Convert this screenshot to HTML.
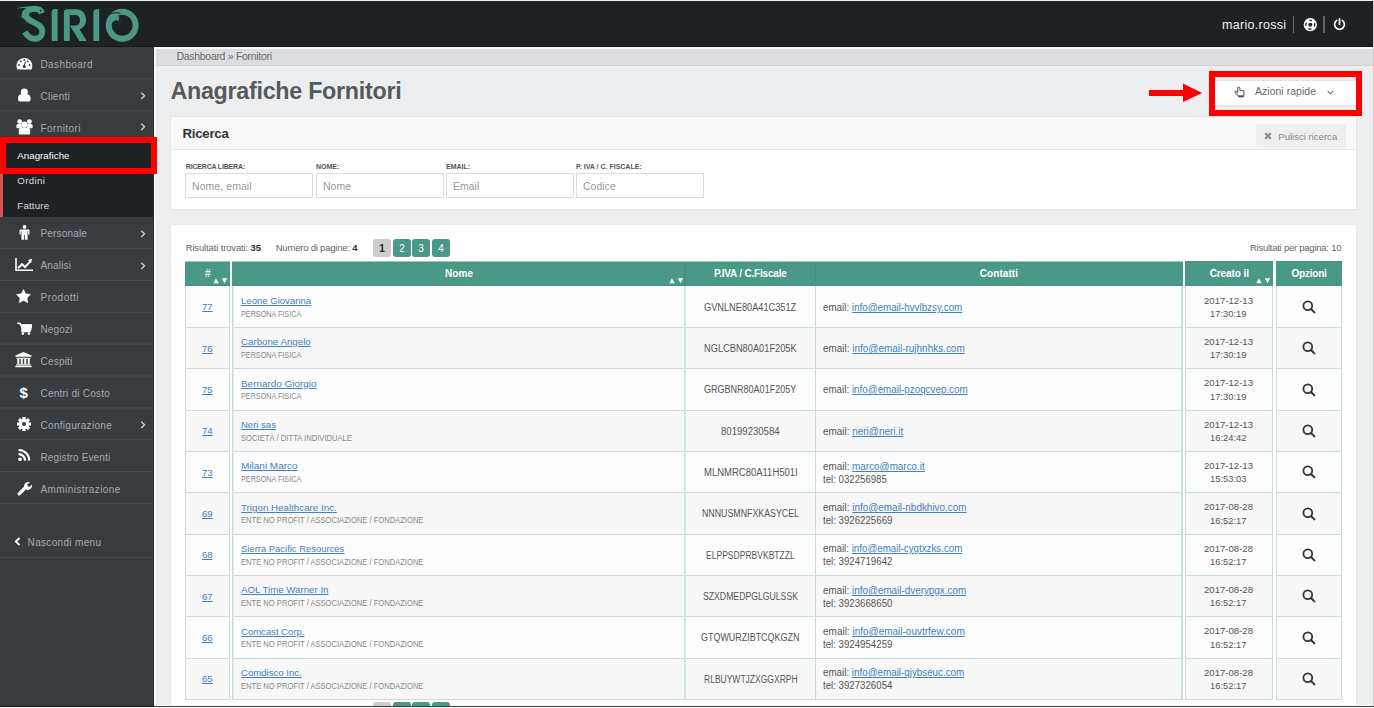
<!DOCTYPE html>
<html><head><meta charset="utf-8"><style>
html,body{margin:0;padding:0;width:1374px;height:708px;overflow:hidden;background:#edeef0}
body{position:relative;font-family:"Liberation Sans",sans-serif}
.t{position:absolute;white-space:nowrap}
.r{position:absolute;display:block}
</style></head><body>
<div class="r" style="left:0px;top:0px;width:1374px;height:708px;background:#edeef0"></div>
<div class="r" style="left:0px;top:0px;width:1374px;height:1px;background:#f4f4f4"></div>
<div class="r" style="left:0px;top:1px;width:1373px;height:46px;background:#1f2224"></div>
<div class="r" style="left:0px;top:46px;width:1373px;height:1px;background:#16191a"></div>
<div class="r" style="left:0px;top:47px;width:154px;height:659px;background:#383c3f"></div>
<div class="r" style="left:153px;top:47px;width:1px;height:659px;background:#2c3032"></div>
<div class="r" style="left:154px;top:47px;width:2px;height:659px;background:#f6f6f7"></div>
<div class="r" style="left:156px;top:47px;width:1217px;height:2px;background:#f6f6f7"></div>
<div class="r" style="left:156px;top:49px;width:1217px;height:16px;background:#dcdde0"></div>
<div class="r" style="left:156px;top:65px;width:1217px;height:1px;background:#d2d3d6"></div>
<div class="r" style="left:1373px;top:0px;width:1px;height:708px;background:#c9c9c9"></div>
<svg class="r" style="left:0px;top:0px;" width="150" height="47" viewBox="0 0 150 47">
<g fill="none" stroke="#4a9886" stroke-width="6">
<path d="M24.8 32 C27.5 36.5 31 38.8 35 38.8 C39.5 38.8 42.3 35.5 42.3 31.5 C42.3 26.5 38 24.5 34 22.5 C29.5 20.3 26 18.5 26 14.5 C26 10.5 30 8.8 35 8.8 C38.5 8.8 41 10.5 42 13.2"/>
<circle cx="122.2" cy="25.3" r="13.5" stroke-width="5.9"/>
</g>
<g fill="#4a9886">
<path d="M21.3 17 L22.5 11 L26 9 L27 15 L24 19 Z"/>
<path d="M16.4 8.6 C20 7.2 25 6.4 30 6.6 L29 8.2 C25 8 20 8.2 16.4 8.6 Z"/>
<path d="M66.9 9.3 H76 C82 9.3 86.1 13.6 86.1 19.8 C86.1 24.6 83.3 28 79.6 29.6 L86.8 40.9 H79.4 L70.6 26.8 V25.4 H76 C78.5 25.4 80 23 80 20.2 C80 17.2 78.4 15.1 76 15.1 H69.7 V40.9 H63.9 V12.3 C63.9 10.6 65.2 9.3 66.9 9.3 Z"/>
<path d="M54.5 9 H57.6 V40.9 H51.7 V11.8 C51.7 10.3 53 9 54.5 9 Z"/>
<path d="M96.3 9.2 H99.2 V40.9 H93.4 V12.1 C93.4 10.5 94.7 9.2 96.3 9.2 Z"/>
<path d="M111.5 21.5 C112.8 17 116.5 15 119.2 16.6 L118.7 21 C116.4 19.6 113.8 20.2 112.2 22.8 Z"/>
</g>
<path d="M109.3 14.6 C112.5 12.6 116.5 12.3 120.5 13.4" fill="none" stroke="#1f2224" stroke-width="1"/>
<circle cx="40.7" cy="10.6" r="0.9" fill="#1f2224"/>
</svg>
<div class="t" style="left:1222.00px;top:18.00px;font-size:12.5px;line-height:15px;letter-spacing:0.287px;color:#f2f2f2;">mario.rossi</div>
<div class="r" style="left:1293px;top:16px;width:1px;height:17px;background:#6a6d6f"></div>
<div class="r" style="left:1323px;top:16px;width:2px;height:17px;background:#5f6264"></div>
<svg class="r" style="left:1303px;top:18px;" width="15" height="14" viewBox="0 0 15 14"><circle cx="7.3" cy="6.7" r="6.6" fill="#fff"/><circle cx="7.3" cy="6.7" r="2" fill="#1f2224"/><circle cx="7.3" cy="6.7" r="4.4" fill="none" stroke="#1f2224" stroke-width="1.3" stroke-dasharray="3.4 3.51" stroke-dashoffset="1.7" transform="rotate(-90 7.3 6.7)"/></svg>
<svg class="r" style="left:1333px;top:17px;" width="13" height="15" viewBox="0 0 13 15"><path d="M3.69 3.39 A4.9 4.9 0 1 0 9.31 3.39" fill="none" stroke="#fff" stroke-width="1.7" stroke-linecap="round"/><line x1="6.5" y1="2" x2="6.5" y2="7.4" stroke="#fff" stroke-width="1.8" stroke-linecap="round"/></svg>
<div class="r" style="left:0px;top:78px;width:153px;height:1px;background:rgb(67,72,75)"></div>
<div class="r" style="left:0px;top:79px;width:153px;height:1px;background:rgb(61,65,68)"></div>
<div class="r" style="left:0px;top:110px;width:153px;height:1px;background:rgb(67,72,75)"></div>
<div class="r" style="left:0px;top:111px;width:153px;height:1px;background:rgb(61,65,68)"></div>
<div class="r" style="left:0px;top:248px;width:153px;height:1px;background:rgb(70,75,78)"></div>
<div class="r" style="left:0px;top:249px;width:153px;height:1px;background:rgb(58,62,65)"></div>
<div class="r" style="left:0px;top:279px;width:153px;height:1px;background:rgb(57,61,64)"></div>
<div class="r" style="left:0px;top:280px;width:153px;height:1px;background:rgb(71,76,79)"></div>
<div class="r" style="left:0px;top:311px;width:153px;height:1px;background:rgb(59,63,66)"></div>
<div class="r" style="left:0px;top:312px;width:153px;height:1px;background:rgb(69,74,77)"></div>
<div class="r" style="left:0px;top:343px;width:153px;height:1px;background:rgb(62,66,69)"></div>
<div class="r" style="left:0px;top:344px;width:153px;height:1px;background:rgb(66,71,74)"></div>
<div class="r" style="left:0px;top:375px;width:153px;height:1px;background:rgb(64,68,72)"></div>
<div class="r" style="left:0px;top:376px;width:153px;height:1px;background:rgb(64,68,72)"></div>
<div class="r" style="left:0px;top:407px;width:153px;height:1px;background:rgb(66,71,74)"></div>
<div class="r" style="left:0px;top:408px;width:153px;height:1px;background:rgb(62,66,69)"></div>
<div class="r" style="left:0px;top:439px;width:153px;height:1px;background:rgb(69,74,77)"></div>
<div class="r" style="left:0px;top:440px;width:153px;height:1px;background:rgb(59,63,66)"></div>
<div class="r" style="left:0px;top:471px;width:153px;height:1px;background:rgb(71,76,79)"></div>
<div class="r" style="left:0px;top:472px;width:153px;height:1px;background:rgb(57,61,64)"></div>
<div class="r" style="left:0px;top:502px;width:153px;height:1px;background:rgb(58,62,65)"></div>
<div class="r" style="left:0px;top:503px;width:153px;height:1px;background:rgb(70,75,78)"></div>
<div class="r" style="left:0px;top:557px;width:153px;height:1px;background:rgb(72,77,80)"></div>
<div class="r" style="left:0px;top:143px;width:153px;height:74px;background:#1f2224"></div>
<div class="r" style="left:0px;top:143px;width:3px;height:74px;background:#d9534f"></div>
<div class="t" style="left:17.30px;top:150.00px;font-size:9.7px;line-height:12px;letter-spacing:0.045px;color:#ffffff;">Anagrafiche</div>
<div class="t" style="left:17.30px;top:175.00px;font-size:9.7px;line-height:12px;letter-spacing:0.340px;color:#dcdcdc;">Ordini</div>
<div class="t" style="left:17.30px;top:200.00px;font-size:9.7px;line-height:12px;letter-spacing:0.192px;color:#dcdcdc;">Fatture</div>
<div class="t" style="left:40.50px;top:59.00px;font-size:10px;line-height:12px;letter-spacing:0.387px;color:#a3abb3;">Dashboard</div>
<div class="t" style="left:40.50px;top:91.00px;font-size:10px;line-height:12px;letter-spacing:0.233px;color:#a3abb3;">Clienti</div>
<div class="t" style="left:40.50px;top:123.00px;font-size:10px;line-height:12px;letter-spacing:0.412px;color:#a3abb3;">Fornitori</div>
<div class="t" style="left:40.50px;top:228.00px;font-size:10px;line-height:12px;letter-spacing:0.169px;color:#a3abb3;">Personale</div>
<div class="t" style="left:40.50px;top:260.00px;font-size:10px;line-height:12px;letter-spacing:0.175px;color:#a3abb3;">Analisi</div>
<div class="t" style="left:40.50px;top:292.00px;font-size:10px;line-height:12px;letter-spacing:0.507px;color:#a3abb3;">Prodotti</div>
<div class="t" style="left:40.50px;top:324.00px;font-size:10px;line-height:12px;letter-spacing:0.130px;color:#a3abb3;">Negozi</div>
<div class="t" style="left:40.50px;top:356.00px;font-size:10px;line-height:12px;letter-spacing:0.208px;color:#a3abb3;">Cespiti</div>
<div class="t" style="left:40.50px;top:388.00px;font-size:10px;line-height:12px;letter-spacing:0.225px;color:#a3abb3;">Centri di Costo</div>
<div class="t" style="left:40.50px;top:420.00px;font-size:10px;line-height:12px;letter-spacing:0.304px;color:#a3abb3;">Configurazione</div>
<div class="t" style="left:40.50px;top:452.00px;font-size:10px;line-height:12px;letter-spacing:0.129px;color:#a3abb3;">Registro Eventi</div>
<div class="t" style="left:40.50px;top:484.00px;font-size:10px;line-height:12px;letter-spacing:0.421px;color:#a3abb3;">Amministrazione</div>
<div class="t" style="left:27.60px;top:537.00px;font-size:10px;line-height:12px;letter-spacing:0.325px;color:#a3abb3;">Nascondi menu</div>
<svg class="r" style="left:140px;top:91.6px;" width="6" height="8" viewBox="0 0 6 8"><path d="M1.3 0.7 L4.5 3.8 L1.3 6.9" fill="none" stroke="#c9d0d6" stroke-width="1.4"/></svg>
<svg class="r" style="left:140px;top:123.39999999999999px;" width="6" height="8" viewBox="0 0 6 8"><path d="M1.3 0.7 L4.5 3.8 L1.3 6.9" fill="none" stroke="#c9d0d6" stroke-width="1.4"/></svg>
<svg class="r" style="left:140px;top:229.8px;" width="6" height="8" viewBox="0 0 6 8"><path d="M1.3 0.7 L4.5 3.8 L1.3 6.9" fill="none" stroke="#c9d0d6" stroke-width="1.4"/></svg>
<svg class="r" style="left:140px;top:261.6px;" width="6" height="8" viewBox="0 0 6 8"><path d="M1.3 0.7 L4.5 3.8 L1.3 6.9" fill="none" stroke="#c9d0d6" stroke-width="1.4"/></svg>
<svg class="r" style="left:140px;top:420.6px;" width="6" height="8" viewBox="0 0 6 8"><path d="M1.3 0.7 L4.5 3.8 L1.3 6.9" fill="none" stroke="#c9d0d6" stroke-width="1.4"/></svg>
<svg class="r" style="left:13.5px;top:537px;" width="7" height="9" viewBox="0 0 7 9"><path d="M5.5 1 L1.8 4.5 L5.5 8" fill="none" stroke="#fff" stroke-width="1.8"/></svg>
<svg class="r" style="left:15.5px;top:56.5px;" width="17" height="13" viewBox="0 0 17 13"><path d="M1.4 12.5 A7.9 7.9 0 1 1 15.4 12.5 Z" fill="#fff"/><g fill="#383c3f"><circle cx="3" cy="8" r="0.95"/><circle cx="4.7" cy="4.4" r="0.95"/><circle cx="8.3" cy="2.9" r="0.95"/><circle cx="11.8" cy="4.4" r="0.95"/><circle cx="13.6" cy="8" r="0.95"/><circle cx="8.2" cy="9.5" r="1.6"/></g><line x1="8.2" y1="9.5" x2="9.3" y2="4.7" stroke="#383c3f" stroke-width="1.1"/></svg>
<svg class="r" style="left:17.5px;top:87.5px;" width="13" height="14" viewBox="0 0 13 14"><circle cx="6.3" cy="4" r="3.6" fill="#fff"/><path d="M3.3 6.2 H9.3 C11.2 6.2 12.5 7.8 12.5 10 V12 Q12.5 13.4 11.1 13.4 H1.5 Q0.1 13.4 0.1 12 V10 C0.1 7.8 1.4 6.2 3.3 6.2 Z" fill="#fff"/></svg>
<svg class="r" style="left:15.5px;top:118.5px;" width="17" height="16" viewBox="0 0 17 16"><g fill="#fff"><circle cx="3.7" cy="2.6" r="2.4"/><circle cx="13.4" cy="2.6" r="2.4"/><path d="M2.2 5 H5.5 L6 9.2 H1.2 Q0.4 9.2 0.4 8.4 V7 C0.4 5.8 1.1 5 2.2 5 Z"/><path d="M14.8 5 H11.5 L11 9.2 H15.8 Q16.6 9.2 16.6 8.4 V7 C16.6 5.8 15.9 5 14.8 5 Z"/><circle cx="8.5" cy="5.6" r="3.1"/><path d="M5.6 8.6 H11.4 C13 8.6 14.2 9.8 14.2 11.6 V14.3 Q14.2 15.5 13 15.5 H4 Q2.8 15.5 2.8 14.3 V11.6 C2.8 9.8 4 8.6 5.6 8.6 Z"/></g></svg>
<svg class="r" style="left:18.5px;top:224.5px;" width="11" height="15" viewBox="0 0 11 15"><circle cx="5.5" cy="1.9" r="1.9" fill="#fff"/><path d="M1.5 4.4 H9.5 Q10.5 4.4 10.5 5.4 V9.6 H9.2 V6.2 H8.6 V14.8 H5.9 V10 H5.1 V14.8 H2.4 V6.2 H1.8 V9.6 H0.5 V5.4 Q0.5 4.4 1.5 4.4 Z" fill="#fff"/></svg>
<svg class="r" style="left:15px;top:257.5px;" width="18" height="14" viewBox="0 0 18 14"><path d="M1 0 V12.3 H18" fill="none" stroke="#fff" stroke-width="1.6"/><path d="M3 10.2 L7 6.2 L10 9 L15.2 3.6" fill="none" stroke="#fff" stroke-width="2"/><path d="M12.8 2 L17 0.8 L16.2 5 Z" fill="#fff"/></svg>
<svg class="r" style="left:16px;top:288.5px;" width="15" height="15" viewBox="0 0 15 15"><polygon points="7.50,0.40 9.67,4.81 14.54,5.51 11.02,8.94 11.85,13.79 7.50,11.50 3.15,13.79 3.98,8.94 0.46,5.51 5.33,4.81" fill="#fff" stroke="#fff" stroke-width="0.5" stroke-linejoin="round"/></svg>
<svg class="r" style="left:16.5px;top:321.5px;" width="15" height="13" viewBox="0 0 15 13"><path d="M0.3 1.3 H3 L3.6 3 H14.6 L13.4 8.3 H4.8 L5.2 9.5 H13.4" fill="none" stroke="#fff" stroke-width="1.6" stroke-linejoin="round"/><path d="M3.4 2.6 H14.6 L13.4 8.3 H4.8 Z" fill="#fff"/><circle cx="5.8" cy="11.6" r="1.3" fill="#fff"/><circle cx="12" cy="11.6" r="1.3" fill="#fff"/></svg>
<svg class="r" style="left:15px;top:352px;" width="17" height="16" viewBox="0 0 17 16"><path d="M8.5 0 L16.5 3.6 V4.8 H0.5 V3.6 Z" fill="#fff"/><rect x="1.5" y="5.8" width="14" height="1" fill="#fff"/><g fill="#fff"><rect x="2.3" y="6.6" width="2" height="5.4"/><rect x="5.8" y="6.6" width="2" height="5.4"/><rect x="9.2" y="6.6" width="2" height="5.4"/><rect x="12.7" y="6.6" width="2" height="5.4"/></g><rect x="1.2" y="12.3" width="14.6" height="1.2" fill="#fff"/><rect x="0.3" y="13.8" width="16.4" height="1.4" fill="#fff"/></svg>
<div class="t" style="left:19.50px;top:384.00px;font-size:15px;line-height:18px;letter-spacing:0.000px;color:#fff;font-weight:bold;">$</div>
<svg class="r" style="left:17px;top:416.8px;" width="14" height="14" viewBox="0 0 14 14"><g transform="translate(7,7)" fill="#fff"><rect x="-1.6" y="-7" width="3.2" height="3.4" rx="0.5" transform="rotate(0)"/><rect x="-1.6" y="-7" width="3.2" height="3.4" rx="0.5" transform="rotate(45)"/><rect x="-1.6" y="-7" width="3.2" height="3.4" rx="0.5" transform="rotate(90)"/><rect x="-1.6" y="-7" width="3.2" height="3.4" rx="0.5" transform="rotate(135)"/><rect x="-1.6" y="-7" width="3.2" height="3.4" rx="0.5" transform="rotate(180)"/><rect x="-1.6" y="-7" width="3.2" height="3.4" rx="0.5" transform="rotate(225)"/><rect x="-1.6" y="-7" width="3.2" height="3.4" rx="0.5" transform="rotate(270)"/><rect x="-1.6" y="-7" width="3.2" height="3.4" rx="0.5" transform="rotate(315)"/><circle r="4.9"/></g><circle cx="7" cy="7" r="2" fill="#383c3f"/></svg>
<svg class="r" style="left:17.5px;top:448.5px;" width="13" height="12.5" viewBox="0 0 13 12.5"><circle cx="2" cy="10.3" r="1.8" fill="#fff"/><path d="M0.6 5.1 A6.3 6.3 0 0 1 7 11.6" fill="none" stroke="#fff" stroke-width="2.2"/><path d="M0.6 0.9 A10.6 10.6 0 0 1 11.2 11.6" fill="none" stroke="#fff" stroke-width="2.2"/></svg>
<svg class="r" style="left:16.5px;top:480.5px;" width="15" height="15" viewBox="0 0 15 15"><path d="M2.2 12.8 L8 7" stroke="#fff" stroke-width="3.2" stroke-linecap="round"/><path d="M7.2 6.3 A4.3 4.3 0 0 1 12.8 1.2 L10.2 3.6 L10.9 5.3 L12.6 6 L14.9 3.5 A4.3 4.3 0 0 1 9.3 8.6 Z" fill="#fff"/></svg>
<div class="t" style="left:176.50px;top:50.00px;font-size:10.5px;line-height:13px;letter-spacing:-0.302px;color:#6a6a6a;">Dashboard &raquo; Fornitori</div>
<div class="t" style="left:170.40px;top:77.00px;font-size:23.3px;line-height:28px;letter-spacing:-0.278px;color:#555a5d;font-weight:bold;">Anagrafiche Fornitori</div>
<div class="r" style="left:1212px;top:80px;width:144px;height:26px;background:#fff;border-top:1px solid #e3e3e3;border-bottom:1px solid #e3e3e3;box-sizing:border-box"></div>
<div class="t" style="left:1255.00px;top:86.00px;font-size:10.4px;line-height:12px;letter-spacing:0.074px;color:#666;">Azioni rapide</div>
<svg class="r" style="left:1231px;top:84px;" width="18" height="16" viewBox="0 0 18 16"><path d="M7.2 11.6 L4.3 8.7 C3.7 8 4 7.1 4.8 7.3 L6.7 8.3 V4.3 C6.7 3 8.9 3 8.9 4.3 V6.3 L12.1 6.6 C12.7 6.7 12.9 7.2 12.9 7.8 V11.4 L12.5 12.1 H7.6 Z" fill="none" stroke="#666" stroke-width="1.1" stroke-linejoin="round"/><rect x="7.5" y="11.6" width="5.2" height="1.8" fill="#555"/></svg>
<svg class="r" style="left:1327px;top:90px;" width="7" height="5" viewBox="0 0 7 5"><path d="M0.7 0.8 L3.5 3.8 L6.3 0.8" fill="none" stroke="#666" stroke-width="1.1"/></svg>
<div class="r" style="left:1209px;top:71px;width:153px;height:45px;border:6px solid #ff0000;box-sizing:border-box"></div>
<div class="r" style="left:1149px;top:90px;width:36px;height:6px;background:#ff0000"></div>
<svg class="r" style="left:1183px;top:83px;" width="20" height="20" viewBox="0 0 20 20"><polygon points="0,0.6 19,10 0,19" fill="#ff0000"/></svg>
<div class="r" style="left:0px;top:137px;width:157px;height:37px;border:6px solid #ff0000;box-sizing:border-box"></div>
<div class="r" style="left:170px;top:116px;width:1187px;height:94px;background:#fff;border:1px solid #e3e4e6;box-sizing:border-box"></div>
<div class="r" style="left:171px;top:117px;width:1185px;height:32px;background:#f9f9f9"></div>
<div class="r" style="left:171px;top:149px;width:1185px;height:1px;background:#e6e7e8"></div>
<div class="t" style="left:182.50px;top:126.00px;font-size:13.3px;line-height:16px;letter-spacing:-0.285px;color:#333;font-weight:bold;">Ricerca</div>
<div class="r" style="left:1256px;top:124px;width:90px;height:24px;background:#efefef;border-radius:3px"></div>
<svg class="r" style="left:1264px;top:132px;" width="8" height="8" viewBox="0 0 8 8"><path d="M1.2 1.2 L6.8 6.8 M6.8 1.2 L1.2 6.8" stroke="#888" stroke-width="2"/></svg>
<div class="t" style="left:1278.30px;top:131.00px;font-size:9.6px;line-height:12px;letter-spacing:-0.017px;color:#888;">Pulisci ricerca</div>
<div class="t" style="left:185.80px;top:163.00px;font-size:7px;line-height:8px;letter-spacing:-0.189px;color:#555;font-weight:bold;">RICERCA LIBERA:</div>
<div class="r" style="left:185px;top:173px;width:128px;height:25px;background:#fff;border:1px solid #dcdcdc;box-sizing:border-box"></div>
<div class="t" style="left:192.00px;top:180.00px;font-size:10.5px;line-height:13px;letter-spacing:0.064px;color:#999;">Nome, email</div>
<div class="t" style="left:316.00px;top:163.00px;font-size:7px;line-height:8px;letter-spacing:0.000px;color:#555;font-weight:bold;">NOME:</div>
<div class="r" style="left:316px;top:173px;width:128px;height:25px;background:#fff;border:1px solid #dcdcdc;box-sizing:border-box"></div>
<div class="t" style="left:323.00px;top:180.00px;font-size:10.5px;line-height:13px;letter-spacing:0.000px;color:#999;">Nome</div>
<div class="t" style="left:446.00px;top:163.00px;font-size:7px;line-height:8px;letter-spacing:0.000px;color:#555;font-weight:bold;">EMAIL:</div>
<div class="r" style="left:446px;top:173px;width:128px;height:25px;background:#fff;border:1px solid #dcdcdc;box-sizing:border-box"></div>
<div class="t" style="left:453.00px;top:180.00px;font-size:10.5px;line-height:13px;letter-spacing:0.000px;color:#999;">Email</div>
<div class="t" style="left:576.00px;top:163.00px;font-size:7px;line-height:8px;letter-spacing:0.006px;color:#555;font-weight:bold;">P. IVA / C. FISCALE:</div>
<div class="r" style="left:576px;top:173px;width:128px;height:25px;background:#fff;border:1px solid #dcdcdc;box-sizing:border-box"></div>
<div class="t" style="left:583.00px;top:180.00px;font-size:10.5px;line-height:13px;letter-spacing:0.000px;color:#999;">Codice</div>
<div class="r" style="left:170px;top:224px;width:1187px;height:482px;background:#fff;border:1px solid #e8e9eb;border-bottom:none;box-sizing:border-box"></div>
<div class="r" style="left:373px;top:239px;width:18px;height:18px;background:#cccccc;border-radius:3px"></div>
<div class="t" style="left:379.23px;top:243.00px;font-size:10px;line-height:12px;letter-spacing:0.000px;color:#222;font-weight:bold;">1</div>
<div class="r" style="left:393px;top:239px;width:18px;height:18px;background:#4a9886;border-radius:3px"></div>
<div class="t" style="left:399.23px;top:243.00px;font-size:10px;line-height:12px;letter-spacing:0.000px;color:#fff;">2</div>
<div class="r" style="left:412px;top:239px;width:18px;height:18px;background:#4a9886;border-radius:3px"></div>
<div class="t" style="left:418.23px;top:243.00px;font-size:10px;line-height:12px;letter-spacing:0.000px;color:#fff;">3</div>
<div class="r" style="left:432px;top:239px;width:18px;height:18px;background:#4a9886;border-radius:3px"></div>
<div class="t" style="left:438.23px;top:243.00px;font-size:10px;line-height:12px;letter-spacing:0.000px;color:#fff;">4</div>
<div class="r" style="left:373px;top:702px;width:18px;height:18px;background:#cccccc;border-radius:3px"></div>
<div class="t" style="left:379.23px;top:706.00px;font-size:10px;line-height:12px;letter-spacing:0.000px;color:#222;font-weight:bold;">1</div>
<div class="r" style="left:393px;top:702px;width:18px;height:18px;background:#4a9886;border-radius:3px"></div>
<div class="t" style="left:399.23px;top:706.00px;font-size:10px;line-height:12px;letter-spacing:0.000px;color:#fff;">2</div>
<div class="r" style="left:412px;top:702px;width:18px;height:18px;background:#4a9886;border-radius:3px"></div>
<div class="t" style="left:418.23px;top:706.00px;font-size:10px;line-height:12px;letter-spacing:0.000px;color:#fff;">3</div>
<div class="r" style="left:432px;top:702px;width:18px;height:18px;background:#4a9886;border-radius:3px"></div>
<div class="t" style="left:438.23px;top:706.00px;font-size:10px;line-height:12px;letter-spacing:0.000px;color:#fff;">4</div>
<div class="t" style="left:185.70px;top:242.00px;font-size:9.5px;line-height:11px;letter-spacing:-0.142px;color:#666;">Risultati trovati: <b style="color:#333">35</b></div>
<div class="t" style="left:275.70px;top:242.00px;font-size:9.5px;line-height:11px;letter-spacing:-0.203px;color:#666;">Numero di pagine: <b style="color:#333">4</b></div>
<div class="t" style="left:1249.90px;top:242.00px;font-size:9.5px;line-height:11px;letter-spacing:-0.243px;color:#666;">Risultati per pagina: 10</div>
<div class="r" style="left:185px;top:261px;width:45px;height:1px;background:#a3cac2"></div>
<div class="r" style="left:185px;top:262px;width:45px;height:1px;background:#44927f"></div>
<div class="r" style="left:185px;top:263px;width:45px;height:22px;background:#4a9886"></div>
<div class="r" style="left:185px;top:285px;width:45px;height:1px;background:#45917f"></div>
<div class="r" style="left:232px;top:261px;width:951px;height:1px;background:#a3cac2"></div>
<div class="r" style="left:232px;top:262px;width:951px;height:1px;background:#44927f"></div>
<div class="r" style="left:232px;top:263px;width:951px;height:22px;background:#4a9886"></div>
<div class="r" style="left:232px;top:285px;width:951px;height:1px;background:#45917f"></div>
<div class="r" style="left:1185px;top:261px;width:88px;height:1px;background:#a3cac2"></div>
<div class="r" style="left:1185px;top:262px;width:88px;height:1px;background:#44927f"></div>
<div class="r" style="left:1185px;top:263px;width:88px;height:22px;background:#4a9886"></div>
<div class="r" style="left:1185px;top:285px;width:88px;height:1px;background:#45917f"></div>
<div class="r" style="left:1276px;top:261px;width:66px;height:1px;background:#a3cac2"></div>
<div class="r" style="left:1276px;top:262px;width:66px;height:1px;background:#44927f"></div>
<div class="r" style="left:1276px;top:263px;width:66px;height:22px;background:#4a9886"></div>
<div class="r" style="left:1276px;top:285px;width:66px;height:1px;background:#45917f"></div>
<div class="r" style="left:684px;top:262px;width:2px;height:24px;background:#45907e"></div>
<div class="r" style="left:815px;top:262px;width:1px;height:24px;background:#45907e"></div>
<div class="r" style="left:1185px;top:261px;width:88px;height:25px;background:#4a9886;border-top:1px solid #45907e;box-sizing:border-box"></div>
<div class="r" style="left:1276px;top:261px;width:66px;height:25px;background:#4a9886;border-top:1px solid #45907e;box-sizing:border-box"></div>
<div class="t" style="left:204.90px;top:268.00px;font-size:10px;line-height:12px;letter-spacing:0.000px;color:#fff;font-weight:bold;">#</div>
<div class="t" style="left:445.00px;top:268.00px;font-size:10px;line-height:12px;letter-spacing:0.067px;color:#fff;font-weight:bold;">Nome</div>
<div class="t" style="left:714.00px;top:268.00px;font-size:10px;line-height:12px;letter-spacing:-0.197px;color:#fff;font-weight:bold;">P.IVA / C.Fiscale</div>
<div class="t" style="left:979.80px;top:268.00px;font-size:10px;line-height:12px;letter-spacing:0.064px;color:#fff;font-weight:bold;">Contatti</div>
<div class="t" style="left:1209.70px;top:268.00px;font-size:10px;line-height:12px;letter-spacing:-0.088px;color:#fff;font-weight:bold;">Creato il</div>
<div class="t" style="left:1291.50px;top:268.00px;font-size:10px;line-height:12px;letter-spacing:-0.225px;color:#fff;font-weight:bold;">Opzioni</div>
<svg class="r" style="left:213px;top:278px;" width="15" height="6" viewBox="0 0 15 6"><polygon points="0.3,5.3 3,0.3 5.7,5.3" fill="#fff"/><polygon points="8.8,0.3 14.2,0.3 11.5,5.3" fill="#fff"/></svg>
<svg class="r" style="left:669px;top:278px;" width="15" height="6" viewBox="0 0 15 6"><polygon points="0.3,5.3 3,0.3 5.7,5.3" fill="#fff"/><polygon points="8.8,0.3 14.2,0.3 11.5,5.3" fill="#fff"/></svg>
<svg class="r" style="left:1256px;top:278px;" width="15" height="6" viewBox="0 0 15 6"><polygon points="0.3,5.3 3,0.3 5.7,5.3" fill="#fff"/><polygon points="8.8,0.3 14.2,0.3 11.5,5.3" fill="#fff"/></svg>
<div class="r" style="left:185px;top:286px;width:45px;height:41px;background:#fdfdfd"></div>
<div class="r" style="left:185px;top:327px;width:45px;height:1px;background:#c9dcd9"></div>
<div class="r" style="left:232px;top:286px;width:951px;height:41px;background:#fdfdfd"></div>
<div class="r" style="left:232px;top:327px;width:951px;height:1px;background:#c9dcd9"></div>
<div class="r" style="left:1185px;top:286px;width:88px;height:41px;background:#fdfdfd"></div>
<div class="r" style="left:1185px;top:327px;width:88px;height:1px;background:#c9dcd9"></div>
<div class="r" style="left:1276px;top:286px;width:66px;height:41px;background:#fdfdfd"></div>
<div class="r" style="left:1276px;top:327px;width:66px;height:1px;background:#c9dcd9"></div>
<div class="t" style="left:202.15px;top:301.00px;font-size:9.9px;line-height:12px;letter-spacing:0.000px;color:#4282be;text-decoration:underline;text-underline-offset:1.2px;transform:scaleX(0.9737);transform-origin:0 0;">77</div>
<div class="t" style="left:241.00px;top:295.00px;font-size:9.9px;line-height:12px;letter-spacing:0.000px;color:#4282be;text-decoration:underline;text-underline-offset:1.2px;transform:scaleX(0.9682);transform-origin:0 0;">Leone Giovanna</div>
<div class="t" style="left:241.00px;top:309.00px;font-size:8.3px;line-height:10px;letter-spacing:0.000px;color:#888;transform:scaleX(0.8711);transform-origin:0 0;">PERSONA FISICA</div>
<div class="t" style="left:704.40px;top:302.00px;font-size:10px;line-height:12px;letter-spacing:0.000px;color:#555;transform:scaleX(0.9215);transform-origin:0 0;">GVNLNE80A41C351Z</div>
<div class="t" style="left:823.20px;top:302.00px;font-size:10px;line-height:12px;letter-spacing:0.000px;color:#555;transform:scaleX(0.9793);transform-origin:0 0;">email: <span style="color:#4282be;text-decoration:underline;text-underline-offset:1.2px;">info@email-hvvlbzsy.com</span></div>
<div class="t" style="left:1204.00px;top:295.00px;font-size:9.8px;line-height:12px;letter-spacing:0.000px;color:#555;transform:scaleX(0.9775);transform-origin:0 0;">2017-12-13</div>
<div class="t" style="left:1210.30px;top:308.00px;font-size:9.8px;line-height:12px;letter-spacing:0.000px;color:#555;transform:scaleX(0.9536);transform-origin:0 0;">17:30:19</div>
<svg class="r" style="left:1302px;top:300px;" width="14" height="14" viewBox="0 0 14 14"><circle cx="5.8" cy="5.8" r="4.4" fill="none" stroke="#333" stroke-width="1.8"/><line x1="9" y1="9" x2="12.4" y2="12.4" stroke="#333" stroke-width="2" stroke-linecap="round"/></svg>
<div class="r" style="left:185px;top:328px;width:45px;height:40px;background:#f7f7f7"></div>
<div class="r" style="left:185px;top:368px;width:45px;height:1px;background:#c9dcd9"></div>
<div class="r" style="left:232px;top:328px;width:951px;height:40px;background:#f7f7f7"></div>
<div class="r" style="left:232px;top:368px;width:951px;height:1px;background:#c9dcd9"></div>
<div class="r" style="left:1185px;top:328px;width:88px;height:40px;background:#f7f7f7"></div>
<div class="r" style="left:1185px;top:368px;width:88px;height:1px;background:#c9dcd9"></div>
<div class="r" style="left:1276px;top:328px;width:66px;height:40px;background:#f7f7f7"></div>
<div class="r" style="left:1276px;top:368px;width:66px;height:1px;background:#c9dcd9"></div>
<div class="t" style="left:202.15px;top:343.00px;font-size:9.9px;line-height:12px;letter-spacing:0.000px;color:#4282be;text-decoration:underline;text-underline-offset:1.2px;transform:scaleX(0.9737);transform-origin:0 0;">76</div>
<div class="t" style="left:241.00px;top:336.00px;font-size:9.9px;line-height:12px;letter-spacing:0.000px;color:#4282be;text-decoration:underline;text-underline-offset:1.2px;transform:scaleX(0.9841);transform-origin:0 0;">Carbone Angelo</div>
<div class="t" style="left:241.00px;top:350.00px;font-size:8.3px;line-height:10px;letter-spacing:0.000px;color:#888;transform:scaleX(0.8711);transform-origin:0 0;">PERSONA FISICA</div>
<div class="t" style="left:704.15px;top:343.00px;font-size:10px;line-height:12px;letter-spacing:0.000px;color:#555;transform:scaleX(0.9265);transform-origin:0 0;">NGLCBN80A01F205K</div>
<div class="t" style="left:823.20px;top:343.00px;font-size:10px;line-height:12px;letter-spacing:0.000px;color:#555;transform:scaleX(0.9947);transform-origin:0 0;">email: <span style="color:#4282be;text-decoration:underline;text-underline-offset:1.2px;">info@email-rujhnhks.com</span></div>
<div class="t" style="left:1204.00px;top:336.00px;font-size:9.8px;line-height:12px;letter-spacing:0.000px;color:#555;transform:scaleX(0.9775);transform-origin:0 0;">2017-12-13</div>
<div class="t" style="left:1210.30px;top:349.00px;font-size:9.8px;line-height:12px;letter-spacing:0.000px;color:#555;transform:scaleX(0.9536);transform-origin:0 0;">17:30:19</div>
<svg class="r" style="left:1302px;top:341px;" width="14" height="14" viewBox="0 0 14 14"><circle cx="5.8" cy="5.8" r="4.4" fill="none" stroke="#333" stroke-width="1.8"/><line x1="9" y1="9" x2="12.4" y2="12.4" stroke="#333" stroke-width="2" stroke-linecap="round"/></svg>
<div class="r" style="left:185px;top:369px;width:45px;height:41px;background:#fdfdfd"></div>
<div class="r" style="left:185px;top:410px;width:45px;height:1px;background:#c9dcd9"></div>
<div class="r" style="left:232px;top:369px;width:951px;height:41px;background:#fdfdfd"></div>
<div class="r" style="left:232px;top:410px;width:951px;height:1px;background:#c9dcd9"></div>
<div class="r" style="left:1185px;top:369px;width:88px;height:41px;background:#fdfdfd"></div>
<div class="r" style="left:1185px;top:410px;width:88px;height:1px;background:#c9dcd9"></div>
<div class="r" style="left:1276px;top:369px;width:66px;height:41px;background:#fdfdfd"></div>
<div class="r" style="left:1276px;top:410px;width:66px;height:1px;background:#c9dcd9"></div>
<div class="t" style="left:202.15px;top:384.00px;font-size:9.9px;line-height:12px;letter-spacing:0.000px;color:#4282be;text-decoration:underline;text-underline-offset:1.2px;transform:scaleX(0.9737);transform-origin:0 0;">75</div>
<div class="t" style="left:241.00px;top:378.00px;font-size:9.9px;line-height:12px;letter-spacing:0.000px;color:#4282be;text-decoration:underline;text-underline-offset:1.2px;transform:scaleX(1.0041);transform-origin:0 0;">Bernardo Giorgio</div>
<div class="t" style="left:241.00px;top:391.00px;font-size:8.3px;line-height:10px;letter-spacing:0.000px;color:#888;transform:scaleX(0.8711);transform-origin:0 0;">PERSONA FISICA</div>
<div class="t" style="left:704.40px;top:384.00px;font-size:10px;line-height:12px;letter-spacing:0.000px;color:#555;transform:scaleX(0.9017);transform-origin:0 0;">GRGBNR80A01F205Y</div>
<div class="t" style="left:823.20px;top:384.00px;font-size:10px;line-height:12px;letter-spacing:0.000px;color:#555;transform:scaleX(0.9807);transform-origin:0 0;">email: <span style="color:#4282be;text-decoration:underline;text-underline-offset:1.2px;">info@email-pzoqcvep.com</span></div>
<div class="t" style="left:1204.00px;top:377.00px;font-size:9.8px;line-height:12px;letter-spacing:0.000px;color:#555;transform:scaleX(0.9775);transform-origin:0 0;">2017-12-13</div>
<div class="t" style="left:1210.30px;top:391.00px;font-size:9.8px;line-height:12px;letter-spacing:0.000px;color:#555;transform:scaleX(0.9536);transform-origin:0 0;">17:30:19</div>
<svg class="r" style="left:1302px;top:383px;" width="14" height="14" viewBox="0 0 14 14"><circle cx="5.8" cy="5.8" r="4.4" fill="none" stroke="#333" stroke-width="1.8"/><line x1="9" y1="9" x2="12.4" y2="12.4" stroke="#333" stroke-width="2" stroke-linecap="round"/></svg>
<div class="r" style="left:185px;top:411px;width:45px;height:40px;background:#f7f7f7"></div>
<div class="r" style="left:185px;top:451px;width:45px;height:1px;background:#c9dcd9"></div>
<div class="r" style="left:232px;top:411px;width:951px;height:40px;background:#f7f7f7"></div>
<div class="r" style="left:232px;top:451px;width:951px;height:1px;background:#c9dcd9"></div>
<div class="r" style="left:1185px;top:411px;width:88px;height:40px;background:#f7f7f7"></div>
<div class="r" style="left:1185px;top:451px;width:88px;height:1px;background:#c9dcd9"></div>
<div class="r" style="left:1276px;top:411px;width:66px;height:40px;background:#f7f7f7"></div>
<div class="r" style="left:1276px;top:451px;width:66px;height:1px;background:#c9dcd9"></div>
<div class="t" style="left:202.15px;top:425.00px;font-size:9.9px;line-height:12px;letter-spacing:0.000px;color:#4282be;text-decoration:underline;text-underline-offset:1.2px;transform:scaleX(0.9737);transform-origin:0 0;">74</div>
<div class="t" style="left:241.00px;top:419.00px;font-size:9.9px;line-height:12px;letter-spacing:0.000px;color:#4282be;text-decoration:underline;text-underline-offset:1.2px;transform:scaleX(0.9633);transform-origin:0 0;">Neri sas</div>
<div class="t" style="left:241.00px;top:433.00px;font-size:8.3px;line-height:10px;letter-spacing:0.000px;color:#888;transform:scaleX(0.9198);transform-origin:0 0;">SOCIETÀ / DITTA INDIVIDUALE</div>
<div class="t" style="left:721.20px;top:426.00px;font-size:10px;line-height:12px;letter-spacing:0.000px;color:#555;transform:scaleX(0.9575);transform-origin:0 0;">80199230584</div>
<div class="t" style="left:823.20px;top:426.00px;font-size:10px;line-height:12px;letter-spacing:0.000px;color:#555;transform:scaleX(0.9932);transform-origin:0 0;">email: <span style="color:#4282be;text-decoration:underline;text-underline-offset:1.2px;">neri@neri.it</span></div>
<div class="t" style="left:1204.00px;top:419.00px;font-size:9.8px;line-height:12px;letter-spacing:0.000px;color:#555;transform:scaleX(0.9775);transform-origin:0 0;">2017-12-13</div>
<div class="t" style="left:1210.30px;top:432.00px;font-size:9.8px;line-height:12px;letter-spacing:0.000px;color:#555;transform:scaleX(0.9536);transform-origin:0 0;">16:24:42</div>
<svg class="r" style="left:1302px;top:424px;" width="14" height="14" viewBox="0 0 14 14"><circle cx="5.8" cy="5.8" r="4.4" fill="none" stroke="#333" stroke-width="1.8"/><line x1="9" y1="9" x2="12.4" y2="12.4" stroke="#333" stroke-width="2" stroke-linecap="round"/></svg>
<div class="r" style="left:185px;top:452px;width:45px;height:40px;background:#fdfdfd"></div>
<div class="r" style="left:185px;top:492px;width:45px;height:1px;background:#c9dcd9"></div>
<div class="r" style="left:232px;top:452px;width:951px;height:40px;background:#fdfdfd"></div>
<div class="r" style="left:232px;top:492px;width:951px;height:1px;background:#c9dcd9"></div>
<div class="r" style="left:1185px;top:452px;width:88px;height:40px;background:#fdfdfd"></div>
<div class="r" style="left:1185px;top:492px;width:88px;height:1px;background:#c9dcd9"></div>
<div class="r" style="left:1276px;top:452px;width:66px;height:40px;background:#fdfdfd"></div>
<div class="r" style="left:1276px;top:492px;width:66px;height:1px;background:#c9dcd9"></div>
<div class="t" style="left:202.15px;top:467.00px;font-size:9.9px;line-height:12px;letter-spacing:0.000px;color:#4282be;text-decoration:underline;text-underline-offset:1.2px;transform:scaleX(0.9737);transform-origin:0 0;">73</div>
<div class="t" style="left:241.00px;top:460.00px;font-size:9.9px;line-height:12px;letter-spacing:0.000px;color:#4282be;text-decoration:underline;text-underline-offset:1.2px;transform:scaleX(1.0119);transform-origin:0 0;">Milani Marco</div>
<div class="t" style="left:241.00px;top:474.00px;font-size:8.3px;line-height:10px;letter-spacing:0.000px;color:#888;transform:scaleX(0.8711);transform-origin:0 0;">PERSONA FISICA</div>
<div class="t" style="left:703.65px;top:467.00px;font-size:10px;line-height:12px;letter-spacing:0.000px;color:#555;transform:scaleX(0.9489);transform-origin:0 0;">MLNMRC80A11H501I</div>
<div class="t" style="left:823.20px;top:461.00px;font-size:10px;line-height:12px;letter-spacing:0.000px;color:#555;transform:scaleX(0.9888);transform-origin:0 0;">email: <span style="color:#4282be;text-decoration:underline;text-underline-offset:1.2px;">marco@marco.it</span></div>
<div class="t" style="left:823.20px;top:474.00px;font-size:10.2px;line-height:12px;letter-spacing:0.000px;color:#555;transform:scaleX(0.9470);transform-origin:0 0;">tel: 032256985</div>
<div class="t" style="left:1204.00px;top:460.00px;font-size:9.8px;line-height:12px;letter-spacing:0.000px;color:#555;transform:scaleX(0.9775);transform-origin:0 0;">2017-12-13</div>
<div class="t" style="left:1210.30px;top:473.00px;font-size:9.8px;line-height:12px;letter-spacing:0.000px;color:#555;transform:scaleX(0.9536);transform-origin:0 0;">15:53:03</div>
<svg class="r" style="left:1302px;top:465px;" width="14" height="14" viewBox="0 0 14 14"><circle cx="5.8" cy="5.8" r="4.4" fill="none" stroke="#333" stroke-width="1.8"/><line x1="9" y1="9" x2="12.4" y2="12.4" stroke="#333" stroke-width="2" stroke-linecap="round"/></svg>
<div class="r" style="left:185px;top:493px;width:45px;height:41px;background:#f7f7f7"></div>
<div class="r" style="left:185px;top:534px;width:45px;height:1px;background:#c9dcd9"></div>
<div class="r" style="left:232px;top:493px;width:951px;height:41px;background:#f7f7f7"></div>
<div class="r" style="left:232px;top:534px;width:951px;height:1px;background:#c9dcd9"></div>
<div class="r" style="left:1185px;top:493px;width:88px;height:41px;background:#f7f7f7"></div>
<div class="r" style="left:1185px;top:534px;width:88px;height:1px;background:#c9dcd9"></div>
<div class="r" style="left:1276px;top:493px;width:66px;height:41px;background:#f7f7f7"></div>
<div class="r" style="left:1276px;top:534px;width:66px;height:1px;background:#c9dcd9"></div>
<div class="t" style="left:202.15px;top:508.00px;font-size:9.9px;line-height:12px;letter-spacing:0.000px;color:#4282be;text-decoration:underline;text-underline-offset:1.2px;transform:scaleX(0.9737);transform-origin:0 0;">69</div>
<div class="t" style="left:241.00px;top:502.00px;font-size:9.9px;line-height:12px;letter-spacing:0.000px;color:#4282be;text-decoration:underline;text-underline-offset:1.2px;transform:scaleX(0.9895);transform-origin:0 0;">Trigon Healthcare Inc.</div>
<div class="t" style="left:241.00px;top:515.00px;font-size:8.3px;line-height:10px;letter-spacing:0.000px;color:#888;transform:scaleX(0.9146);transform-origin:0 0;">ENTE NO PROFIT / ASSOCIAZIONE / FONDAZIONE</div>
<div class="t" style="left:702.00px;top:508.00px;font-size:10px;line-height:12px;letter-spacing:0.000px;color:#555;transform:scaleX(0.8818);transform-origin:0 0;">NNNUSMNFXKASYCEL</div>
<div class="t" style="left:823.20px;top:502.00px;font-size:10px;line-height:12px;letter-spacing:0.000px;color:#555;transform:scaleX(0.9927);transform-origin:0 0;">email: <span style="color:#4282be;text-decoration:underline;text-underline-offset:1.2px;">info@email-nbdkhivo.com</span></div>
<div class="t" style="left:823.20px;top:515.00px;font-size:10.2px;line-height:12px;letter-spacing:0.000px;color:#555;transform:scaleX(0.9496);transform-origin:0 0;">tel: 3926225669</div>
<div class="t" style="left:1204.00px;top:501.00px;font-size:9.8px;line-height:12px;letter-spacing:0.000px;color:#555;transform:scaleX(0.9775);transform-origin:0 0;">2017-08-28</div>
<div class="t" style="left:1210.30px;top:515.00px;font-size:9.8px;line-height:12px;letter-spacing:0.000px;color:#555;transform:scaleX(0.9536);transform-origin:0 0;">16:52:17</div>
<svg class="r" style="left:1302px;top:507px;" width="14" height="14" viewBox="0 0 14 14"><circle cx="5.8" cy="5.8" r="4.4" fill="none" stroke="#333" stroke-width="1.8"/><line x1="9" y1="9" x2="12.4" y2="12.4" stroke="#333" stroke-width="2" stroke-linecap="round"/></svg>
<div class="r" style="left:185px;top:535px;width:45px;height:40px;background:#fdfdfd"></div>
<div class="r" style="left:185px;top:575px;width:45px;height:1px;background:#c9dcd9"></div>
<div class="r" style="left:232px;top:535px;width:951px;height:40px;background:#fdfdfd"></div>
<div class="r" style="left:232px;top:575px;width:951px;height:1px;background:#c9dcd9"></div>
<div class="r" style="left:1185px;top:535px;width:88px;height:40px;background:#fdfdfd"></div>
<div class="r" style="left:1185px;top:575px;width:88px;height:1px;background:#c9dcd9"></div>
<div class="r" style="left:1276px;top:535px;width:66px;height:40px;background:#fdfdfd"></div>
<div class="r" style="left:1276px;top:575px;width:66px;height:1px;background:#c9dcd9"></div>
<div class="t" style="left:202.15px;top:549.00px;font-size:9.9px;line-height:12px;letter-spacing:0.000px;color:#4282be;text-decoration:underline;text-underline-offset:1.2px;transform:scaleX(0.9737);transform-origin:0 0;">68</div>
<div class="t" style="left:241.00px;top:543.00px;font-size:9.9px;line-height:12px;letter-spacing:0.000px;color:#4282be;text-decoration:underline;text-underline-offset:1.2px;transform:scaleX(0.9557);transform-origin:0 0;">Sierra Pacific Resources</div>
<div class="t" style="left:241.00px;top:557.00px;font-size:8.3px;line-height:10px;letter-spacing:0.000px;color:#888;transform:scaleX(0.9146);transform-origin:0 0;">ENTE NO PROFIT / ASSOCIAZIONE / FONDAZIONE</div>
<div class="t" style="left:706.10px;top:550.00px;font-size:10px;line-height:12px;letter-spacing:0.000px;color:#555;transform:scaleX(0.8543);transform-origin:0 0;">ELPPSDPRBVKBTZZL</div>
<div class="t" style="left:823.20px;top:543.00px;font-size:10px;line-height:12px;letter-spacing:0.000px;color:#555;transform:scaleX(0.9745);transform-origin:0 0;">email: <span style="color:#4282be;text-decoration:underline;text-underline-offset:1.2px;">info@email-cygtxzks.com</span></div>
<div class="t" style="left:823.20px;top:556.00px;font-size:10.2px;line-height:12px;letter-spacing:0.000px;color:#555;transform:scaleX(0.9496);transform-origin:0 0;">tel: 3924719642</div>
<div class="t" style="left:1204.00px;top:543.00px;font-size:9.8px;line-height:12px;letter-spacing:0.000px;color:#555;transform:scaleX(0.9775);transform-origin:0 0;">2017-08-28</div>
<div class="t" style="left:1210.30px;top:556.00px;font-size:9.8px;line-height:12px;letter-spacing:0.000px;color:#555;transform:scaleX(0.9536);transform-origin:0 0;">16:52:17</div>
<svg class="r" style="left:1302px;top:548px;" width="14" height="14" viewBox="0 0 14 14"><circle cx="5.8" cy="5.8" r="4.4" fill="none" stroke="#333" stroke-width="1.8"/><line x1="9" y1="9" x2="12.4" y2="12.4" stroke="#333" stroke-width="2" stroke-linecap="round"/></svg>
<div class="r" style="left:185px;top:576px;width:45px;height:40px;background:#f7f7f7"></div>
<div class="r" style="left:185px;top:616px;width:45px;height:1px;background:#c9dcd9"></div>
<div class="r" style="left:232px;top:576px;width:951px;height:40px;background:#f7f7f7"></div>
<div class="r" style="left:232px;top:616px;width:951px;height:1px;background:#c9dcd9"></div>
<div class="r" style="left:1185px;top:576px;width:88px;height:40px;background:#f7f7f7"></div>
<div class="r" style="left:1185px;top:616px;width:88px;height:1px;background:#c9dcd9"></div>
<div class="r" style="left:1276px;top:576px;width:66px;height:40px;background:#f7f7f7"></div>
<div class="r" style="left:1276px;top:616px;width:66px;height:1px;background:#c9dcd9"></div>
<div class="t" style="left:202.15px;top:591.00px;font-size:9.9px;line-height:12px;letter-spacing:0.000px;color:#4282be;text-decoration:underline;text-underline-offset:1.2px;transform:scaleX(0.9737);transform-origin:0 0;">67</div>
<div class="t" style="left:241.00px;top:584.00px;font-size:9.9px;line-height:12px;letter-spacing:0.000px;color:#4282be;text-decoration:underline;text-underline-offset:1.2px;transform:scaleX(0.9799);transform-origin:0 0;">AOL Time Warner In</div>
<div class="t" style="left:241.00px;top:598.00px;font-size:8.3px;line-height:10px;letter-spacing:0.000px;color:#888;transform:scaleX(0.9146);transform-origin:0 0;">ENTE NO PROFIT / ASSOCIAZIONE / FONDAZIONE</div>
<div class="t" style="left:703.00px;top:591.00px;font-size:10px;line-height:12px;letter-spacing:0.000px;color:#555;transform:scaleX(0.8676);transform-origin:0 0;">SZXDMEDPGLGULSSK</div>
<div class="t" style="left:823.20px;top:585.00px;font-size:10px;line-height:12px;letter-spacing:0.000px;color:#555;transform:scaleX(0.9855);transform-origin:0 0;">email: <span style="color:#4282be;text-decoration:underline;text-underline-offset:1.2px;">info@email-dverypgx.com</span></div>
<div class="t" style="left:823.20px;top:598.00px;font-size:10.2px;line-height:12px;letter-spacing:0.000px;color:#555;transform:scaleX(0.9496);transform-origin:0 0;">tel: 3923668650</div>
<div class="t" style="left:1204.00px;top:584.00px;font-size:9.8px;line-height:12px;letter-spacing:0.000px;color:#555;transform:scaleX(0.9775);transform-origin:0 0;">2017-08-28</div>
<div class="t" style="left:1210.30px;top:597.00px;font-size:9.8px;line-height:12px;letter-spacing:0.000px;color:#555;transform:scaleX(0.9536);transform-origin:0 0;">16:52:17</div>
<svg class="r" style="left:1302px;top:589px;" width="14" height="14" viewBox="0 0 14 14"><circle cx="5.8" cy="5.8" r="4.4" fill="none" stroke="#333" stroke-width="1.8"/><line x1="9" y1="9" x2="12.4" y2="12.4" stroke="#333" stroke-width="2" stroke-linecap="round"/></svg>
<div class="r" style="left:185px;top:617px;width:45px;height:41px;background:#fdfdfd"></div>
<div class="r" style="left:185px;top:658px;width:45px;height:1px;background:#c9dcd9"></div>
<div class="r" style="left:232px;top:617px;width:951px;height:41px;background:#fdfdfd"></div>
<div class="r" style="left:232px;top:658px;width:951px;height:1px;background:#c9dcd9"></div>
<div class="r" style="left:1185px;top:617px;width:88px;height:41px;background:#fdfdfd"></div>
<div class="r" style="left:1185px;top:658px;width:88px;height:1px;background:#c9dcd9"></div>
<div class="r" style="left:1276px;top:617px;width:66px;height:41px;background:#fdfdfd"></div>
<div class="r" style="left:1276px;top:658px;width:66px;height:1px;background:#c9dcd9"></div>
<div class="t" style="left:202.15px;top:632.00px;font-size:9.9px;line-height:12px;letter-spacing:0.000px;color:#4282be;text-decoration:underline;text-underline-offset:1.2px;transform:scaleX(0.9737);transform-origin:0 0;">66</div>
<div class="t" style="left:241.00px;top:626.00px;font-size:9.9px;line-height:12px;letter-spacing:0.000px;color:#4282be;text-decoration:underline;text-underline-offset:1.2px;transform:scaleX(0.9647);transform-origin:0 0;">Comcast Corp.</div>
<div class="t" style="left:241.00px;top:639.00px;font-size:8.3px;line-height:10px;letter-spacing:0.000px;color:#888;transform:scaleX(0.9146);transform-origin:0 0;">ENTE NO PROFIT / ASSOCIAZIONE / FONDAZIONE</div>
<div class="t" style="left:701.30px;top:632.00px;font-size:10px;line-height:12px;letter-spacing:0.000px;color:#555;transform:scaleX(0.8945);transform-origin:0 0;">GTQWURZIBTCQKGZN</div>
<div class="t" style="left:823.20px;top:626.00px;font-size:10px;line-height:12px;letter-spacing:0.000px;color:#555;transform:scaleX(0.9989);transform-origin:0 0;">email: <span style="color:#4282be;text-decoration:underline;text-underline-offset:1.2px;">info@email-ouvtrfew.com</span></div>
<div class="t" style="left:823.20px;top:639.00px;font-size:10.2px;line-height:12px;letter-spacing:0.000px;color:#555;transform:scaleX(0.9496);transform-origin:0 0;">tel: 3924954259</div>
<div class="t" style="left:1204.00px;top:625.00px;font-size:9.8px;line-height:12px;letter-spacing:0.000px;color:#555;transform:scaleX(0.9775);transform-origin:0 0;">2017-08-28</div>
<div class="t" style="left:1210.30px;top:639.00px;font-size:9.8px;line-height:12px;letter-spacing:0.000px;color:#555;transform:scaleX(0.9536);transform-origin:0 0;">16:52:17</div>
<svg class="r" style="left:1302px;top:631px;" width="14" height="14" viewBox="0 0 14 14"><circle cx="5.8" cy="5.8" r="4.4" fill="none" stroke="#333" stroke-width="1.8"/><line x1="9" y1="9" x2="12.4" y2="12.4" stroke="#333" stroke-width="2" stroke-linecap="round"/></svg>
<div class="r" style="left:185px;top:659px;width:45px;height:40px;background:#f7f7f7"></div>
<div class="r" style="left:185px;top:699px;width:45px;height:1px;background:#c9dcd9"></div>
<div class="r" style="left:232px;top:659px;width:951px;height:40px;background:#f7f7f7"></div>
<div class="r" style="left:232px;top:699px;width:951px;height:1px;background:#c9dcd9"></div>
<div class="r" style="left:1185px;top:659px;width:88px;height:40px;background:#f7f7f7"></div>
<div class="r" style="left:1185px;top:699px;width:88px;height:1px;background:#c9dcd9"></div>
<div class="r" style="left:1276px;top:659px;width:66px;height:40px;background:#f7f7f7"></div>
<div class="r" style="left:1276px;top:699px;width:66px;height:1px;background:#c9dcd9"></div>
<div class="t" style="left:202.15px;top:673.00px;font-size:9.9px;line-height:12px;letter-spacing:0.000px;color:#4282be;text-decoration:underline;text-underline-offset:1.2px;transform:scaleX(0.9737);transform-origin:0 0;">65</div>
<div class="t" style="left:241.00px;top:667.00px;font-size:9.9px;line-height:12px;letter-spacing:0.000px;color:#4282be;text-decoration:underline;text-underline-offset:1.2px;transform:scaleX(0.9694);transform-origin:0 0;">Comdisco Inc.</div>
<div class="t" style="left:241.00px;top:681.00px;font-size:8.3px;line-height:10px;letter-spacing:0.000px;color:#888;transform:scaleX(0.9146);transform-origin:0 0;">ENTE NO PROFIT / ASSOCIAZIONE / FONDAZIONE</div>
<div class="t" style="left:703.70px;top:674.00px;font-size:10px;line-height:12px;letter-spacing:0.000px;color:#555;transform:scaleX(0.8509);transform-origin:0 0;">RLBUYWTJZXGGXRPH</div>
<div class="t" style="left:823.20px;top:667.00px;font-size:10px;line-height:12px;letter-spacing:0.000px;color:#555;transform:scaleX(0.9799);transform-origin:0 0;">email: <span style="color:#4282be;text-decoration:underline;text-underline-offset:1.2px;">info@email-qjybseuc.com</span></div>
<div class="t" style="left:823.20px;top:680.00px;font-size:10.2px;line-height:12px;letter-spacing:0.000px;color:#555;transform:scaleX(0.9496);transform-origin:0 0;">tel: 3927326054</div>
<div class="t" style="left:1204.00px;top:667.00px;font-size:9.8px;line-height:12px;letter-spacing:0.000px;color:#555;transform:scaleX(0.9775);transform-origin:0 0;">2017-08-28</div>
<div class="t" style="left:1210.30px;top:680.00px;font-size:9.8px;line-height:12px;letter-spacing:0.000px;color:#555;transform:scaleX(0.9536);transform-origin:0 0;">16:52:17</div>
<svg class="r" style="left:1302px;top:672px;" width="14" height="14" viewBox="0 0 14 14"><circle cx="5.8" cy="5.8" r="4.4" fill="none" stroke="#333" stroke-width="1.8"/><line x1="9" y1="9" x2="12.4" y2="12.4" stroke="#333" stroke-width="2" stroke-linecap="round"/></svg>
<div class="r" style="left:185px;top:286px;width:1px;height:414px;background:#c9dcd9"></div>
<div class="r" style="left:229px;top:286px;width:1px;height:414px;background:#c9dcd9"></div>
<div class="r" style="left:232px;top:286px;width:1px;height:414px;background:#c9dcd9"></div>
<div class="r" style="left:815px;top:286px;width:1px;height:414px;background:#c9dcd9"></div>
<div class="r" style="left:1181px;top:286px;width:2px;height:414px;background:#c9dcd9"></div>
<div class="r" style="left:1185px;top:286px;width:1px;height:414px;background:#c9dcd9"></div>
<div class="r" style="left:1272px;top:286px;width:1px;height:414px;background:#c9dcd9"></div>
<div class="r" style="left:1276px;top:286px;width:1px;height:414px;background:#c9dcd9"></div>
<div class="r" style="left:1341px;top:286px;width:1px;height:414px;background:#c9dcd9"></div>
<div class="r" style="left:233px;top:286px;width:1px;height:414px;background:#e3edeb"></div>
<div class="r" style="left:684px;top:286px;width:2px;height:414px;background:#d3e3e1"></div>
<div class="r" style="left:154px;top:705px;width:16px;height:1px;background:#fafafa"></div>
<div class="r" style="left:1357px;top:705px;width:16px;height:1px;background:#fafafa"></div>
<div class="r" style="left:0px;top:706px;width:1374px;height:1px;background:#3b3f41"></div>
<div class="r" style="left:0px;top:706px;width:154px;height:1px;background:#151718"></div>
<div class="r" style="left:0px;top:707px;width:1374px;height:1px;background:#ffffff"></div>
</body></html>
